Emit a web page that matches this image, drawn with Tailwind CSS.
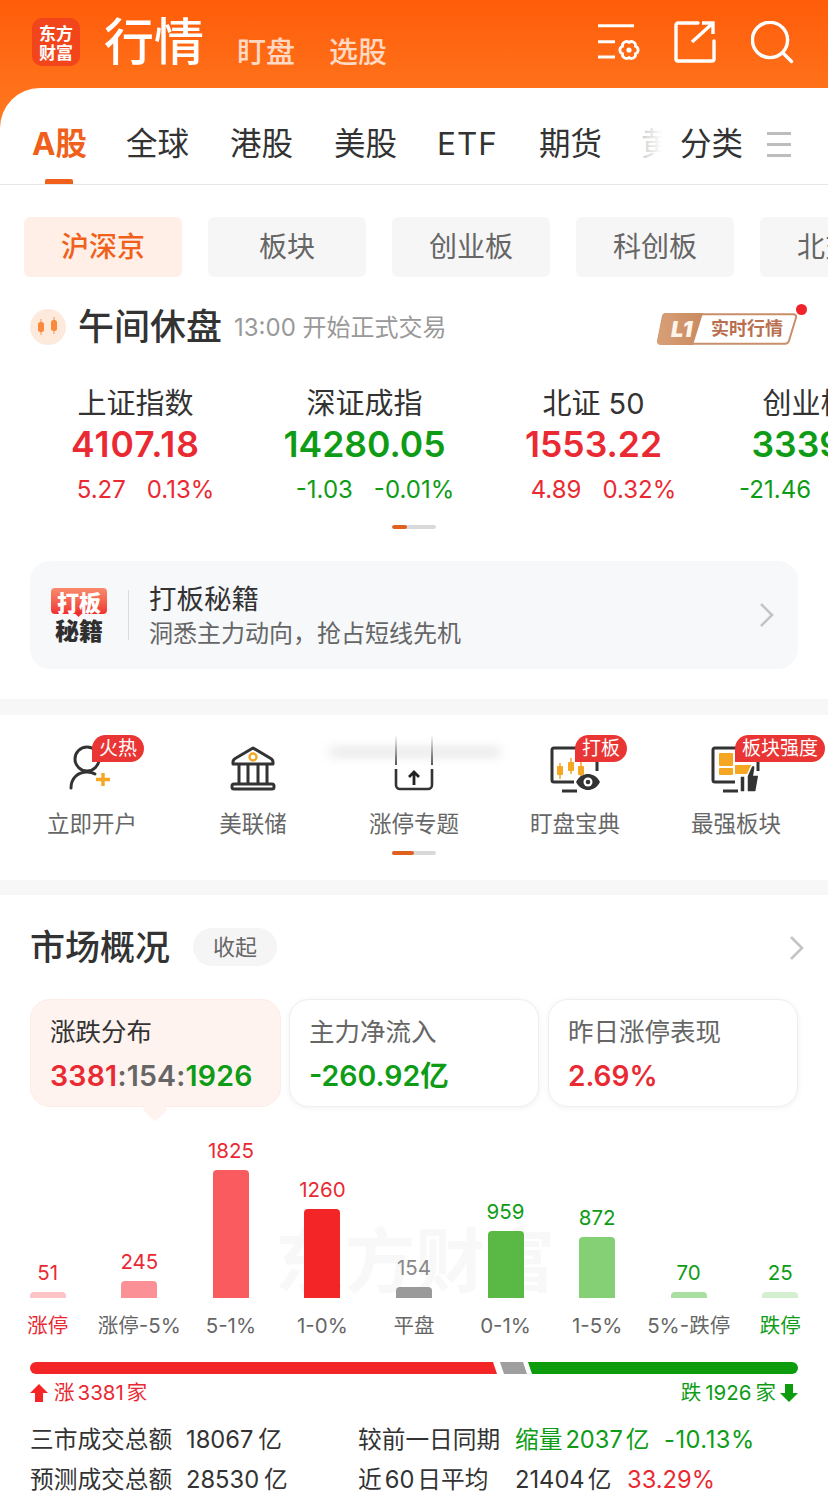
<!DOCTYPE html>
<html lang="zh"><head><meta charset="utf-8">
<script src="https://cdn.jsdelivr.net/npm/@tailwindcss/browser@4"></script>
</head>
<body class="bg-white">
<div class="w-[828px] h-[1498px] overflow-hidden bg-white font-['Inter','Noto_Sans_CJK_SC',sans-serif] text-[#333]">

<!-- header -->
<div class="h-[130px] bg-gradient-to-b from-[#ff5c08] to-[#ff7a20] relative">
  <div class="flex items-start h-[88px] pl-[32px]">
    <div class="w-[48px] h-[48px] mt-[18px] rounded-[10px] bg-[#f2451b] flex flex-col items-center justify-center text-white font-bold text-[17px] leading-[19px] font-['Noto_Sans_CJK_SC',sans-serif]"><span>东方</span><span>财富</span></div>
    <div class="ml-[24px] mt-[7px] text-[50px] leading-[70px] font-medium text-white">行情</div>
    <div class="ml-[33px] mt-[32px] text-[29px] leading-[42px] font-medium text-white/75">盯盘</div>
    <div class="ml-[34px] mt-[32px] text-[29px] leading-[42px] font-medium text-white/75">选股</div>
    <svg class="ml-[211px] mt-[22px]" width="44" height="42" viewBox="0 0 44 42" fill="none" stroke="#fff" stroke-width="3">
      <path d="M0 3.700h36M0 19.700h17M0 35h17"/>
      <path d="M37.500 24.250A4 4 0 0 1 37.500 31.750A4 4 0 0 1 31 35.500A4 4 0 0 1 24.500 31.750A4 4 0 0 1 24.500 24.250A4 4 0 0 1 31 20.500A4 4 0 0 1 37.500 24.250Z" stroke-width="2.800"/>
      <circle cx="31" cy="28" r="2.600" fill="#fff" stroke="none"/>
    </svg>
    <svg class="ml-[32px] mt-[21px]" width="42" height="42" viewBox="0 0 42 42" fill="none" stroke="#fff" stroke-width="3.400">
      <path d="M24 2H4a2 2 0 0 0-2 2v34a2 2 0 0 0 2 2h34a2 2 0 0 0 2-2V20" stroke-linecap="round"/>
      <path d="M18 21L39 2M28 2h11v11"/>
    </svg>
    <svg class="ml-[35px] mt-[21px]" width="44" height="44" viewBox="0 0 44 44" fill="none" stroke="#fff" stroke-width="3.400">
      <circle cx="19" cy="19" r="17.600"/><path d="M32 32l8.500 8.500" stroke-linecap="round"/>
    </svg>
  </div>
</div>

<div class="relative mt-[-42px] bg-white rounded-t-[40px]">
  <!-- tabs -->
  <div class="relative h-[97px] border-b border-[#e6e6e6] overflow-hidden">
    <div class="flex gap-[41px] pl-[32px] pt-[33px] text-[31.500px] leading-[46px] whitespace-nowrap">
      <span class="text-[#f0601a] font-bold mr-[-2px]">A股</span><span>全球</span><span>港股</span><span>美股</span><span class="ml-[-1px] tracking-[1px]">ETF</span><span>期货</span><span class="ml-[-2px] text-[#bbb]">黄金</span>
    </div>
    <div class="absolute left-[45px] top-[91px] w-[28px] h-[5px] rounded-t-[2px] bg-[#f0601a]"></div>
    <div class="absolute right-0 top-0 h-[96px] w-[186px] flex items-start pl-[38px] pt-[33px] bg-[linear-gradient(90deg,rgba(255,255,255,0.3),#fff_11%)]">
      <span class="text-[31.500px] leading-[46px]">分类</span>
      <div class="ml-[24px] mt-[11px] w-[24px] flex flex-col gap-[8px]"><i class="block h-[3px] bg-[#bdbdbd]"></i><i class="block h-[3px] bg-[#bdbdbd]"></i><i class="block h-[3px] bg-[#bdbdbd]"></i></div>
    </div>
  </div>

  <!-- chips -->
  <div class="flex gap-[26px] pl-[24px] pt-[32px] overflow-hidden text-[28px] leading-[61px] text-[#666] whitespace-nowrap">
    <div class="w-[158px] h-[60px] shrink-0 rounded-[6px] bg-[#ffefe7] text-[#f0601a] font-medium text-center">沪深京</div>
    <div class="w-[158px] h-[60px] shrink-0 rounded-[6px] bg-[#f6f6f6] text-center">板块</div>
    <div class="w-[158px] h-[60px] shrink-0 rounded-[6px] bg-[#f6f6f6] text-center">创业板</div>
    <div class="w-[158px] h-[60px] shrink-0 rounded-[6px] bg-[#f6f6f6] text-center">科创板</div>
    <div class="w-[158px] h-[60px] shrink-0 rounded-[6px] bg-[#f6f6f6] text-center">北交所</div>
  </div>

  <!-- status -->
  <div class="relative flex items-center pl-[30px] pt-[25px] h-[75px]">
    <svg width="36" height="36" viewBox="0 0 36 36"><circle cx="18" cy="18" r="18" fill="#fdeadd"/><path d="M11 10v16M24 8v17" stroke="#fbb37a" stroke-width="1.600"/><rect x="8" y="13" width="6" height="10" rx="2.500" fill="#f98a3c"/><rect x="21" y="11" width="6" height="11" rx="2.500" fill="#f98a3c"/></svg>
    <span class="ml-[12px] text-[36px] leading-[50px] font-medium">午间休盘</span>
    <span class="ml-[12px] mt-[2px] text-[24px] leading-[36px] text-[#999]">13:00 开始正式交易</span>
    <div class="absolute left-[657px] top-[36px] w-[141px] h-[32px]">
      <svg class="absolute inset-0" width="141" height="32" viewBox="0 0 141 32"><defs><linearGradient id="g1" x1="0" x2="1"><stop offset="0" stop-color="#d8a077"/><stop offset="1" stop-color="#c98a60"/></linearGradient></defs><path d="M8 1.200h128c2.500 0 3.600 1.500 3 3.500l-7 23c-.6 2-2 3-4 3H4c-2.500 0-3.500-1.600-2.800-3.500L6 3c.4-1.200 1-1.800 2-1.800z" fill="#fff" stroke="#c98f6b" stroke-width="2"/><path d="M8 0h38L36 32H4C1 32-.5 30 .3 27.500L6 3c.4-2 1-3 2-3z" fill="url(#g1)"/></svg>
      <span class="absolute left-[14px] top-0 text-[22px] leading-[32px] italic font-black text-[#fff5ea]">L1</span>
      <span class="absolute left-[54px] top-0 text-[18px] leading-[32px] font-bold text-[#b96f50] whitespace-nowrap">实时行情</span>
    </div>
    <div class="absolute left-[796px] top-[27px] w-[11px] h-[11px] rounded-full bg-[#f0222a]"></div>
  </div>

  <!-- index -->
  <div class="flex pl-[21px] pt-[32px] overflow-hidden whitespace-nowrap">
    <div class="w-[229px] shrink-0 flex flex-col items-center">
      <span class="text-[29px] leading-[40px]">上证指数</span>
      <span class="text-[35.500px] leading-[42px] font-semibold tracking-[1px] text-[#ea2a33]">4107.18</span>
      <span class="mt-[7px] ml-[20px] text-[24px] leading-[34px] text-[#ea2a33] flex gap-[21px]"><span>5.27</span><span>0.13%</span></span>
    </div>
    <div class="w-[229px] shrink-0 flex flex-col items-center">
      <span class="text-[29px] leading-[40px]">深证成指</span>
      <span class="text-[35.500px] leading-[42px] font-semibold text-[#0e9c16]">14280.05</span>
      <span class="mt-[7px] ml-[21px] text-[24px] leading-[34px] text-[#0e9c16] flex gap-[21px]"><span>-1.03</span><span>-0.01%</span></span>
    </div>
    <div class="w-[229px] shrink-0 flex flex-col items-center">
      <span class="text-[29px] leading-[40px]">北证 50</span>
      <span class="text-[35.500px] leading-[42px] font-semibold text-[#ea2a33]">1553.22</span>
      <span class="mt-[7px] ml-[20px] text-[24px] leading-[34px] text-[#ea2a33] flex gap-[21px]"><span>4.89</span><span>0.32%</span></span>
    </div>
    <div class="w-[229px] shrink-0 ml-[-2px] flex flex-col items-center">
      <span class="text-[29px] leading-[40px]">创业板指</span>
      <span class="text-[35.500px] leading-[42px] font-semibold text-[#0e9c16]">3339.21</span>
      <span class="mt-[7px] ml-[16px] text-[24px] leading-[34px] text-[#0e9c16] flex gap-[21px]"><span>-21.46</span><span>-0.64%</span></span>
    </div>
  </div>
  <div class="mt-[18px] mx-auto w-[44px] h-[4px] rounded-full bg-[#d9d9d9] overflow-hidden"><div class="w-[15px] h-full bg-[#e0601f] rounded-full"></div></div>

  <!-- banner -->
  <div class="mx-[30px] mt-[32px] h-[108px] rounded-[20px] bg-[#f7f8fa] flex items-center relative">
    <div class="ml-[20px] w-[58px] flex flex-col items-center font-['Noto_Sans_CJK_SC',sans-serif] font-black leading-none">
      <span class="relative w-[56px] h-[26px] rounded-[4px] bg-gradient-to-b from-[#f98a6c] to-[#ee2f33] text-white text-[22px] leading-[26px] text-center">打板<i class="absolute left-[25px] top-[23px] w-[5px] h-[5px] rotate-45 bg-[#ee2f33]"></i></span>
      <span class="mt-[3px] text-[24px] leading-[26px] text-[#2f2f2f]">秘籍</span>
    </div>
    <div class="ml-[20px] w-px h-[50px] bg-[#dcdcdc]"></div>
    <div class="ml-[20px] flex flex-col">
      <span class="text-[27.500px] leading-[38px]">打板秘籍</span>
      <span class="text-[24px] leading-[32px] text-[#666]">洞悉主力动向，抢占短线先机</span>
    </div>
    <svg class="absolute right-[23px] top-[41px]" width="16" height="26" viewBox="0 0 16 26" fill="none" stroke="#c4c4c4" stroke-width="2.600"><path d="M2 2l11 11L2 24"/></svg>
  </div>

  <div class="mt-[30px] h-[16px] bg-[#f7f7f7]"></div>

  <!-- icon row -->
  <div class="relative h-[165px] flex pl-[11.500px] text-[22.500px] text-[#666] whitespace-nowrap">
    <div class="w-[161px] shrink-0 flex flex-col items-center pt-[30px]">
      <svg width="46" height="46" viewBox="0 0 46 46" fill="none"><circle cx="18" cy="14" r="12" stroke="#333" stroke-width="3"/><path d="M2 43c0-10 7-16 16-16 3 0 6 .7 8 2" stroke="#333" stroke-width="3" stroke-linecap="round"/><path d="M34 28v13M27 34.500h14" stroke="#f5a623" stroke-width="3.400"/></svg>
      <span class="mt-[16px] leading-[34px]">立即开户</span>
    </div>
    <div class="w-[161px] shrink-0 flex flex-col items-center pt-[30px]">
      <svg width="46" height="46" viewBox="0 0 46 46" fill="none" stroke="#333" stroke-width="3" stroke-linejoin="round"><path d="M3 17c0-2 1-3 3-4L23 3l17 10c2 1 3 2 3 4v2H3z"/><path d="M9 19v20M18 19v20M28 19v20M37 19v20"/><rect x="2" y="39" width="42" height="5" rx="2"/><circle cx="23" cy="12" r="3.500" stroke="#f5a623" stroke-width="2.400"/></svg>
      <span class="mt-[16px] leading-[34px]">美联储</span>
    </div>
    <div class="w-[161px] shrink-0 flex flex-col items-center pt-[30px]">
      <svg width="46" height="46" viewBox="0 0 46 46" fill="none"><path d="M5 24v16a4 4 0 0 0 4 4h28a4 4 0 0 0 4-4V24" stroke="#333" stroke-width="2.600"/><path d="M23 40V28M18 32l5-5 5 5" stroke="#222" stroke-width="2.800"/></svg>
      <span class="mt-[16px] leading-[34px]">涨停专题</span>
    </div>
    <div class="w-[161px] shrink-0 flex flex-col items-center pt-[30px]">
      <svg width="50" height="48" viewBox="0 0 50 48" fill="none"><path d="M36 3H4a2 2 0 0 0-2 2v30a2 2 0 0 0 2 2h20M12 46h15M47 17v9" stroke="#333" stroke-width="3"/><path d="M10 18v16M21 13v16M31 17v16" stroke="#f5a623" stroke-width="1.500"/><rect x="7" y="21" width="6" height="9" rx="1" fill="#f5a623"/><rect x="18" y="17" width="6" height="9" rx="1" fill="#f5a623"/><rect x="28" y="21" width="6" height="9" rx="1" fill="#f5a623"/><path d="M26 37c3-6 8-8 12-8s9 2 12 8c-3 6-8 8-12 8s-9-2-12-8z" fill="#333"/><circle cx="38" cy="37" r="4.500" fill="#fff"/><circle cx="38" cy="37" r="2.300" fill="#333"/></svg>
      <span class="mt-[14px] leading-[34px]">盯盘宝典</span>
    </div>
    <div class="w-[161px] shrink-0 flex flex-col items-center pt-[30px]">
      <svg width="50" height="48" viewBox="0 0 50 48" fill="none"><path d="M36 3H4a2 2 0 0 0-2 2v30a2 2 0 0 0 2 2h20M12 46h15M47 17v9" stroke="#333" stroke-width="3"/><rect x="8" y="8" width="14" height="13" rx="1" fill="#f5a623"/><rect x="8" y="23" width="14" height="7" rx="1" fill="#f5a623"/><path d="M24 20h17v9H24z" fill="#f5a623"/><path d="M29 31h5v16h-5zM36 31l4-9c1-3 5-2 4 2l-1 6h5l-3 17H36z" fill="#333" stroke="#fff" stroke-width="1.500"/></svg>
      <span class="mt-[14px] leading-[34px]">最强板块</span>
    </div>
    <!-- blurred scrolling ghost -->
    <div class="absolute left-[330px] top-[31px] w-[170px] h-[12px] bg-[#e4e4e4] blur-[5px] opacity-70"></div>
    <div class="absolute left-[395px] top-[20px] w-[2px] h-[30px] bg-gradient-to-b from-white to-[#555]"></div>
    <div class="absolute left-[431px] top-[20px] w-[2px] h-[30px] bg-gradient-to-b from-white to-[#555]"></div>
    <!-- badges -->
    <div class="absolute left-[92px] top-[20px] h-[27px] px-[7px] rounded-[14px] rounded-bl-none bg-[#ea3535] text-white text-[19px] leading-[27px]">火热</div>
    <div class="absolute left-[575px] top-[20px] h-[27px] px-[7px] rounded-[14px] rounded-bl-none bg-[#ea3535] text-white text-[19px] leading-[27px]">打板</div>
    <div class="absolute left-[735px] top-[20px] h-[27px] px-[7px] rounded-[14px] rounded-bl-none bg-[#ea3535] text-white text-[19px] leading-[27px]">板块强度</div>
    <div class="absolute left-[392px] top-[136px] w-[44px] h-[4px] rounded-full bg-[#d9d9d9]"><div class="w-[22px] h-full bg-[#e0601f] rounded-full"></div></div>
  </div>

  <div class="h-[15px] bg-[#f7f7f7]"></div>

  <!-- market -->
  <div class="relative flex items-center pl-[30px] pt-[33px] h-[71px]">
    <span class="text-[35px] leading-[38px] font-medium">市场概况</span>
    <span class="ml-[23px] w-[84px] h-[38px] rounded-full bg-[#f5f5f5] text-center text-[22px] leading-[38px] text-[#666]">收起</span>
    <svg class="absolute right-[23px] top-[40px]" width="16" height="26" viewBox="0 0 16 26" fill="none" stroke="#c4c4c4" stroke-width="2.600"><path d="M2 2l11 11L2 24"/></svg>
  </div>

  <div class="flex gap-[8px] mx-[30px] mt-[33px]">
    <div class="relative w-[251px] h-[108px] rounded-[20px] bg-[#fff3ef] border border-[#fdece6] pl-[19px] pt-[14px]">
      <div class="text-[25.500px] leading-[36px]">涨跌分布</div>
      <div class="mt-[5px] text-[28.500px] leading-[42px] font-semibold tracking-[0.2px] whitespace-nowrap"><span class="text-[#ea2a33]">3381</span><span class="text-[#666]">:154:</span><span class="text-[#0e9c16]">1926</span></div>
      <div class="absolute left-[115px] top-[100px] w-[18px] h-[18px] rotate-45 bg-[#fff3ef] rounded-[2px]"></div>
    </div>
    <div class="w-[250px] h-[108px] rounded-[20px] bg-white border border-[#efefef] shadow-[0_1px_6px_rgba(0,0,0,0.06)] pl-[19px] pt-[14px]">
      <div class="text-[25.500px] leading-[36px] text-[#666]">主力净流入</div>
      <div class="mt-[5px] text-[28.500px] leading-[42px] font-semibold text-[#0e9c16] whitespace-nowrap">-260.92亿</div>
    </div>
    <div class="w-[250px] ml-[1px] h-[108px] rounded-[20px] bg-white border border-[#efefef] shadow-[0_1px_6px_rgba(0,0,0,0.06)] pl-[19px] pt-[14px]">
      <div class="text-[25.500px] leading-[36px] text-[#666]">昨日涨停表现</div>
      <div class="mt-[5px] text-[28px] leading-[42px] font-semibold text-[#ea2a33] whitespace-nowrap">2.69%</div>
    </div>
  </div>

  <!-- chart -->
  <div class="relative mt-[9px] mx-[2px] w-[824px] h-[226px]">
    <div class="absolute left-[273px] top-[108px] text-[70px] leading-[80px] font-bold text-[#f8f8f8] font-['Liberation_Serif','Noto_Sans_CJK_SC',serif] whitespace-nowrap">东方财富</div>
    <div class="relative grid grid-cols-9 h-[226px] text-[20.500px] text-center">
      <div class="flex flex-col items-center justify-end"><span class="leading-[30px] text-[#ea2a33]">51</span><i class="block w-[36px] h-[6px] mt-[4px] rounded-t-[4px] bg-[#fdc3c6]"></i><span class="mt-[12px] h-[32px] leading-[32px] text-[#ea2a33]">涨停</span></div>
      <div class="flex flex-col items-center justify-end"><span class="leading-[30px] text-[#ea2a33]">245</span><i class="block w-[36px] h-[17px] mt-[4px] rounded-t-[4px] bg-[#fb9196]"></i><span class="mt-[12px] h-[32px] leading-[32px] text-[#666] whitespace-nowrap">涨停-5%</span></div>
      <div class="flex flex-col items-center justify-end"><span class="leading-[30px] text-[#ea2a33]">1825</span><i class="block w-[36px] h-[128px] mt-[4px] rounded-t-[4px] bg-[#f95b5f]"></i><span class="mt-[12px] h-[32px] leading-[32px] text-[#666]">5-1%</span></div>
      <div class="flex flex-col items-center justify-end"><span class="leading-[30px] text-[#ea2a33]">1260</span><i class="block w-[36px] h-[89px] mt-[4px] rounded-t-[4px] bg-[#f42527]"></i><span class="mt-[12px] h-[32px] leading-[32px] text-[#666]">1-0%</span></div>
      <div class="flex flex-col items-center justify-end"><span class="leading-[30px] text-[#888]">154</span><i class="block w-[36px] h-[11px] mt-[4px] rounded-t-[4px] bg-[#9a9a9a]"></i><span class="mt-[12px] h-[32px] leading-[32px] text-[#666]">平盘</span></div>
      <div class="flex flex-col items-center justify-end"><span class="leading-[30px] text-[#0e9c16]">959</span><i class="block w-[36px] h-[67px] mt-[4px] rounded-t-[4px] bg-[#5ab945]"></i><span class="mt-[12px] h-[32px] leading-[32px] text-[#666]">0-1%</span></div>
      <div class="flex flex-col items-center justify-end"><span class="leading-[30px] text-[#0e9c16]">872</span><i class="block w-[36px] h-[61px] mt-[4px] rounded-t-[4px] bg-[#85cf75]"></i><span class="mt-[12px] h-[32px] leading-[32px] text-[#666]">1-5%</span></div>
      <div class="flex flex-col items-center justify-end"><span class="leading-[30px] text-[#0e9c16]">70</span><i class="block w-[36px] h-[6px] mt-[4px] rounded-t-[4px] bg-[#a9dfa0]"></i><span class="mt-[12px] h-[32px] leading-[32px] text-[#666] whitespace-nowrap">5%-跌停</span></div>
      <div class="flex flex-col items-center justify-end"><span class="leading-[30px] text-[#0e9c16]">25</span><i class="block w-[36px] h-[6px] mt-[4px] rounded-t-[4px] bg-[#d3efcf]"></i><span class="mt-[12px] h-[32px] leading-[32px] text-[#0e9c16]">跌停</span></div>
    </div>
  </div>

  <!-- ratio bar -->
  <svg class="block ml-[30px] mt-[20px]" width="768" height="12" viewBox="0 0 768 12"><path d="M6 0H463l4 12H6a6 6 0 0 1 0-12z" fill="#f42527"/><path d="M470 0h23l4 12h-23z" fill="#9f9f9f"/><path d="M498 0h264a6 6 0 0 1 0 12H502z" fill="#0c9c0c"/></svg>
  <div class="flex justify-between mx-[30px] mt-[4px] text-[20.500px] leading-[30px]">
    <span class="flex items-center text-[#ea2a33]"><svg class="mr-[6px]" width="18" height="18" viewBox="0 0 18 18"><path d="M9 0l9 9h-5v9H5V9H0z" fill="#f42527"/></svg>涨<span class="mx-[3px]">3381</span>家</span>
    <span class="flex items-center text-[#0e9c16]">跌<span class="mx-[4px]">1926</span>家<svg class="ml-[4px]" width="18" height="18" viewBox="0 0 18 18"><path d="M9 18L0 9h5V0h8v9h5z" fill="#0c9c0c"/></svg></span>
  </div>

  <!-- stats -->
  <div class="mt-[12px] ml-[30px] text-[23.700px] leading-[40px] whitespace-nowrap">
    <div class="flex">
      <span class="w-[156px]">三市成交总额</span><span class="w-[172px]">18067<span class="ml-[5px]">亿</span></span>
      <span class="w-[157px]">较前一日同期</span><span class="text-[#0e9c16] w-[149px]">缩量<span class="mx-[3px]">2037</span>亿</span><span class="text-[#0e9c16] tracking-[0.5px]">-10.13%</span>
    </div>
    <div class="flex">
      <span class="w-[156px]">预测成交总额</span><span class="w-[172px]">28530<span class="ml-[5px]">亿</span></span>
      <span class="w-[157px]">近<span class="mx-[3px]">60</span>日平均</span><span class="w-[112px]">21404<span class="ml-[3px]">亿</span></span><span class="text-[#ea2a33]">33.29%</span>
    </div>
  </div>
</div>
</div>
</body></html>
